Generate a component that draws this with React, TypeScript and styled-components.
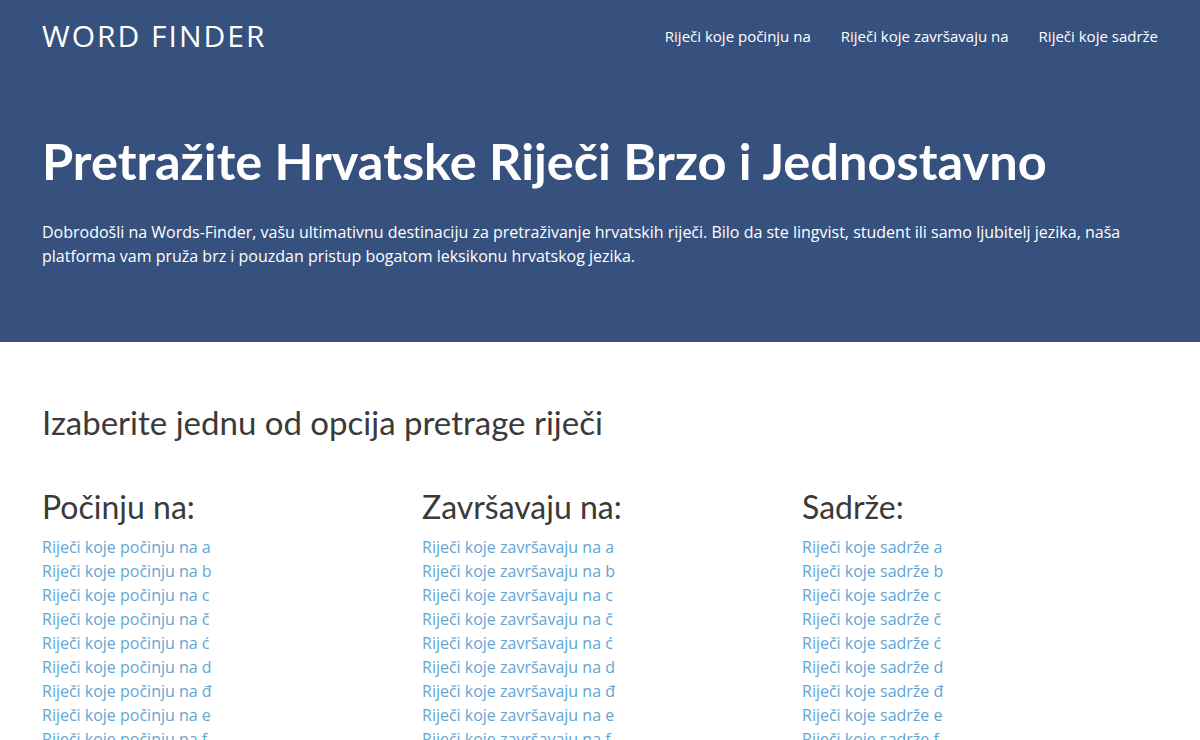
import styled, { createGlobalStyle } from "styled-components";

const GlobalStyle = createGlobalStyle`
  * { box-sizing: border-box; }
  body {
    margin: 0;
    font-family: "Open Sans", "Liberation Sans", sans-serif;
    background: #ffffff;
    color: #3a3a3a;
  }
`;

const Header = styled.header`
  background: #37517e;
  color: #ffffff;
  height: 342px;
  padding: 0 42px;
`;

const TopBar = styled.div`
  display: flex;
  align-items: center;
  justify-content: space-between;
  height: 72px;
`;

const Logo = styled.div`
  font-size: 30px;
  letter-spacing: 2px;
  font-weight: 400;
  margin-top: -2px;
`;

const Nav = styled.nav`
  display: flex;
  gap: 30px;
`;

const NavLink = styled.a`
  color: #ffffff;
  text-decoration: none;
  font-size: 15px;
`;

const HeroTitle = styled.h1`
  font-family: "Lato", "Liberation Sans", sans-serif;
  font-weight: 700;
  font-size: 50.5px;
  line-height: 58px;
  margin: 60px 0 0;
`;

const HeroText = styled.p`
  font-size: 16px;
  line-height: 24px;
  margin: 30px 0 0;
`;

const Main = styled.main`
  padding: 60px 42px 0;
`;

const SectionTitle = styled.h2`
  font-family: "Lato", "Liberation Sans", sans-serif;
  font-weight: 400;
  font-size: 33px;
  line-height: 40px;
  margin: 0;
  color: #3a3a3a;
`;

const Columns = styled.div`
  display: grid;
  grid-template-columns: repeat(3, 380px);
  margin-top: 46px;
`;

const Column = styled.div`
  display: flex;
  flex-direction: column;
`;

const ColumnTitle = styled.h3`
  font-family: "Lato", "Liberation Sans", sans-serif;
  font-weight: 400;
  font-size: 32px;
  line-height: 38px;
  margin: 0 0 9px;
  color: #3a3a3a;
`;

const WordLink = styled.a`
  color: #63a5d3;
  text-decoration: none;
  font-size: 16px;
  line-height: 24px;
`;

const letters = ["a", "b", "c", "č", "ć", "d", "đ", "e", "f", "g", "h"];

const groups = [
  { title: "Počinju na:", prefix: "Riječi koje počinju na" },
  { title: "Završavaju na:", prefix: "Riječi koje završavaju na" },
  { title: "Sadrže:", prefix: "Riječi koje sadrže" },
];

export default function App() {
  return (
    <>
      <GlobalStyle />
      <Header>
        <TopBar>
          <Logo>WORD FINDER</Logo>
          <Nav>
            <NavLink href="#">Riječi koje počinju na</NavLink>
            <NavLink href="#">Riječi koje završavaju na</NavLink>
            <NavLink href="#">Riječi koje sadrže</NavLink>
          </Nav>
        </TopBar>
        <HeroTitle>Pretražite Hrvatske Riječi Brzo i Jednostavno</HeroTitle>
        <HeroText>
          Dobrodošli na Words-Finder, vašu ultimativnu destinaciju za pretraživanje hrvatskih riječi. Bilo da ste
          lingvist, student ili samo ljubitelj jezika, naša platforma vam pruža brz i pouzdan pristup bogatom
          leksikonu hrvatskog jezika.
        </HeroText>
      </Header>
      <Main>
        <SectionTitle>Izaberite jednu od opcija pretrage riječi</SectionTitle>
        <Columns>
          {groups.map((g) => (
            <Column key={g.title}>
              <ColumnTitle>{g.title}</ColumnTitle>
              {letters.map((l) => (
                <WordLink key={l} href="#">
                  {g.prefix} {l}
                </WordLink>
              ))}
            </Column>
          ))}
        </Columns>
      </Main>
    </>
  );
}
